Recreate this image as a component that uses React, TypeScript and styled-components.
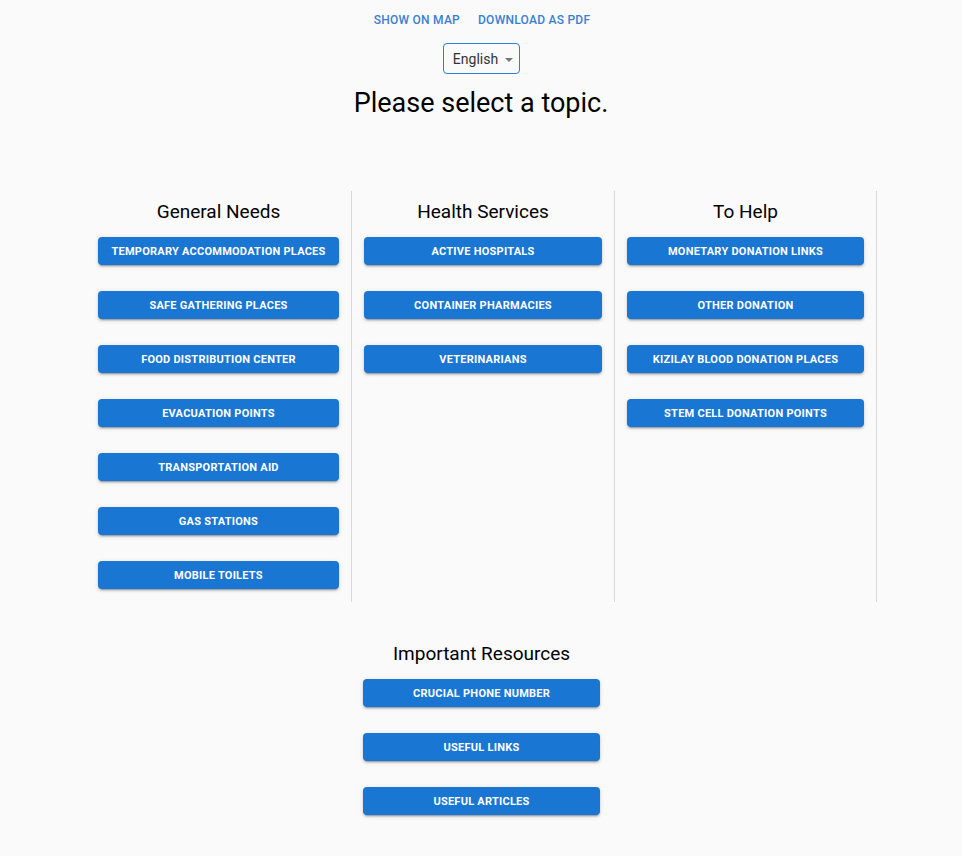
import React from "react";
import styled, { createGlobalStyle } from "styled-components";

const Global = createGlobalStyle`
  html, body { margin: 0; padding: 0; background: #fafafa; }
  body { font-family: Roboto, "Liberation Sans", Arial, sans-serif; color: #000; }
  * { box-sizing: border-box; }
`;

const Page = styled.div`
  display: flex;
  flex-direction: column;
  align-items: center;
  padding-top: 9px;
  padding-bottom: 40px;
`;

const LinkBar = styled.div`
  display: flex;
  gap: 18px;
  justify-content: center;
  padding-left: 2px;
`;

const TextLink = styled.a`
  font-size: 12px;
  font-weight: 500;
  letter-spacing: 0.25px;
  color: #3b7fd4;
  text-transform: uppercase;
  line-height: 22px;
  text-decoration: none;
  cursor: pointer;
`;

const Select = styled.div`
  margin-top: 12px;
  height: 31px;
  width: 77px;
  border: 1px solid #2a7fd6;
  border-radius: 4px;
  display: flex;
  align-items: center;
  justify-content: center;
  gap: 7px;
  font-size: 14px;
  color: #333;
  padding-left: 4px;
`;

const Caret = styled.span`
  width: 0;
  height: 0;
  border-left: 4px solid transparent;
  border-right: 4px solid transparent;
  border-top: 4px solid #777;
  margin-top: 2px;
`;

const Heading = styled.h1`
  margin: 12px 0 0;
  font-size: 27px;
  font-weight: 400;
  line-height: 34px;
`;

const Columns = styled.div`
  margin-top: 71px;
  margin-left: 1px;
  display: grid;
  grid-template-columns: 266px 263px 262px;
`;

const Column = styled.section`
  border-right: 1px solid #d8d8d8;
  padding: 8px 12px 13px;
  display: flex;
  flex-direction: column;
  align-items: stretch;
  min-height: 411px;
`;

const SoloColumn = styled(Column)`
  border-right: none;
  width: 261px;
  margin-top: 31px;
  margin-left: 1px;
  min-height: 0;
  padding-bottom: 0;
`;

const ColumnTitle = styled.h2`
  margin: 0 0 14px;
  padding-top: 1px;
  height: 24px;
  font-size: 19px;
  font-weight: 400;
  line-height: 24px;
  text-align: center;
`;

const ButtonList = styled.div`
  display: flex;
  flex-direction: column;
  gap: 26px;
`;

const TopicButton = styled.button`
  height: 28px;
  border: none;
  border-radius: 4px;
  background: #1976d2;
  color: #fff;
  font-family: Roboto, "Liberation Sans", Arial, sans-serif;
  font-size: 11px;
  font-weight: 700;
  letter-spacing: 0.25px;
  text-transform: uppercase;
  box-shadow: 0 3px 1px -2px rgba(0,0,0,0.2), 0 2px 2px 0 rgba(0,0,0,0.14), 0 1px 5px 0 rgba(0,0,0,0.12);
  cursor: pointer;
`;

const groups = [
  {
    title: "General Needs",
    items: [
      "Temporary Accommodation Places",
      "Safe Gathering Places",
      "Food Distribution Center",
      "Evacuation Points",
      "Transportation Aid",
      "Gas Stations",
      "Mobile Toilets",
    ],
  },
  {
    title: "Health Services",
    items: ["Active Hospitals", "Container Pharmacies", "Veterinarians"],
  },
  {
    title: "To Help",
    items: [
      "Monetary Donation Links",
      "Other Donation",
      "Kizilay Blood Donation Places",
      "Stem Cell Donation Points",
    ],
  },
];

const resources = ["Crucial Phone Number", "Useful Links", "Useful Articles"];

export default function App() {
  return (
    <>
      <Global />
      <Page>
        <LinkBar>
          <TextLink>Show on map</TextLink>
          <TextLink>Download as PDF</TextLink>
        </LinkBar>
        <Select>
          English <Caret />
        </Select>
        <Heading>Please select a topic.</Heading>
        <Columns>
          {groups.map((g) => (
            <Column key={g.title}>
              <ColumnTitle>{g.title}</ColumnTitle>
              <ButtonList>
                {g.items.map((it) => (
                  <TopicButton key={it}>{it}</TopicButton>
                ))}
              </ButtonList>
            </Column>
          ))}
        </Columns>
        <SoloColumn>
          <ColumnTitle>Important Resources</ColumnTitle>
          <ButtonList>
            {resources.map((it) => (
              <TopicButton key={it}>{it}</TopicButton>
            ))}
          </ButtonList>
        </SoloColumn>
      </Page>
    </>
  );
}
